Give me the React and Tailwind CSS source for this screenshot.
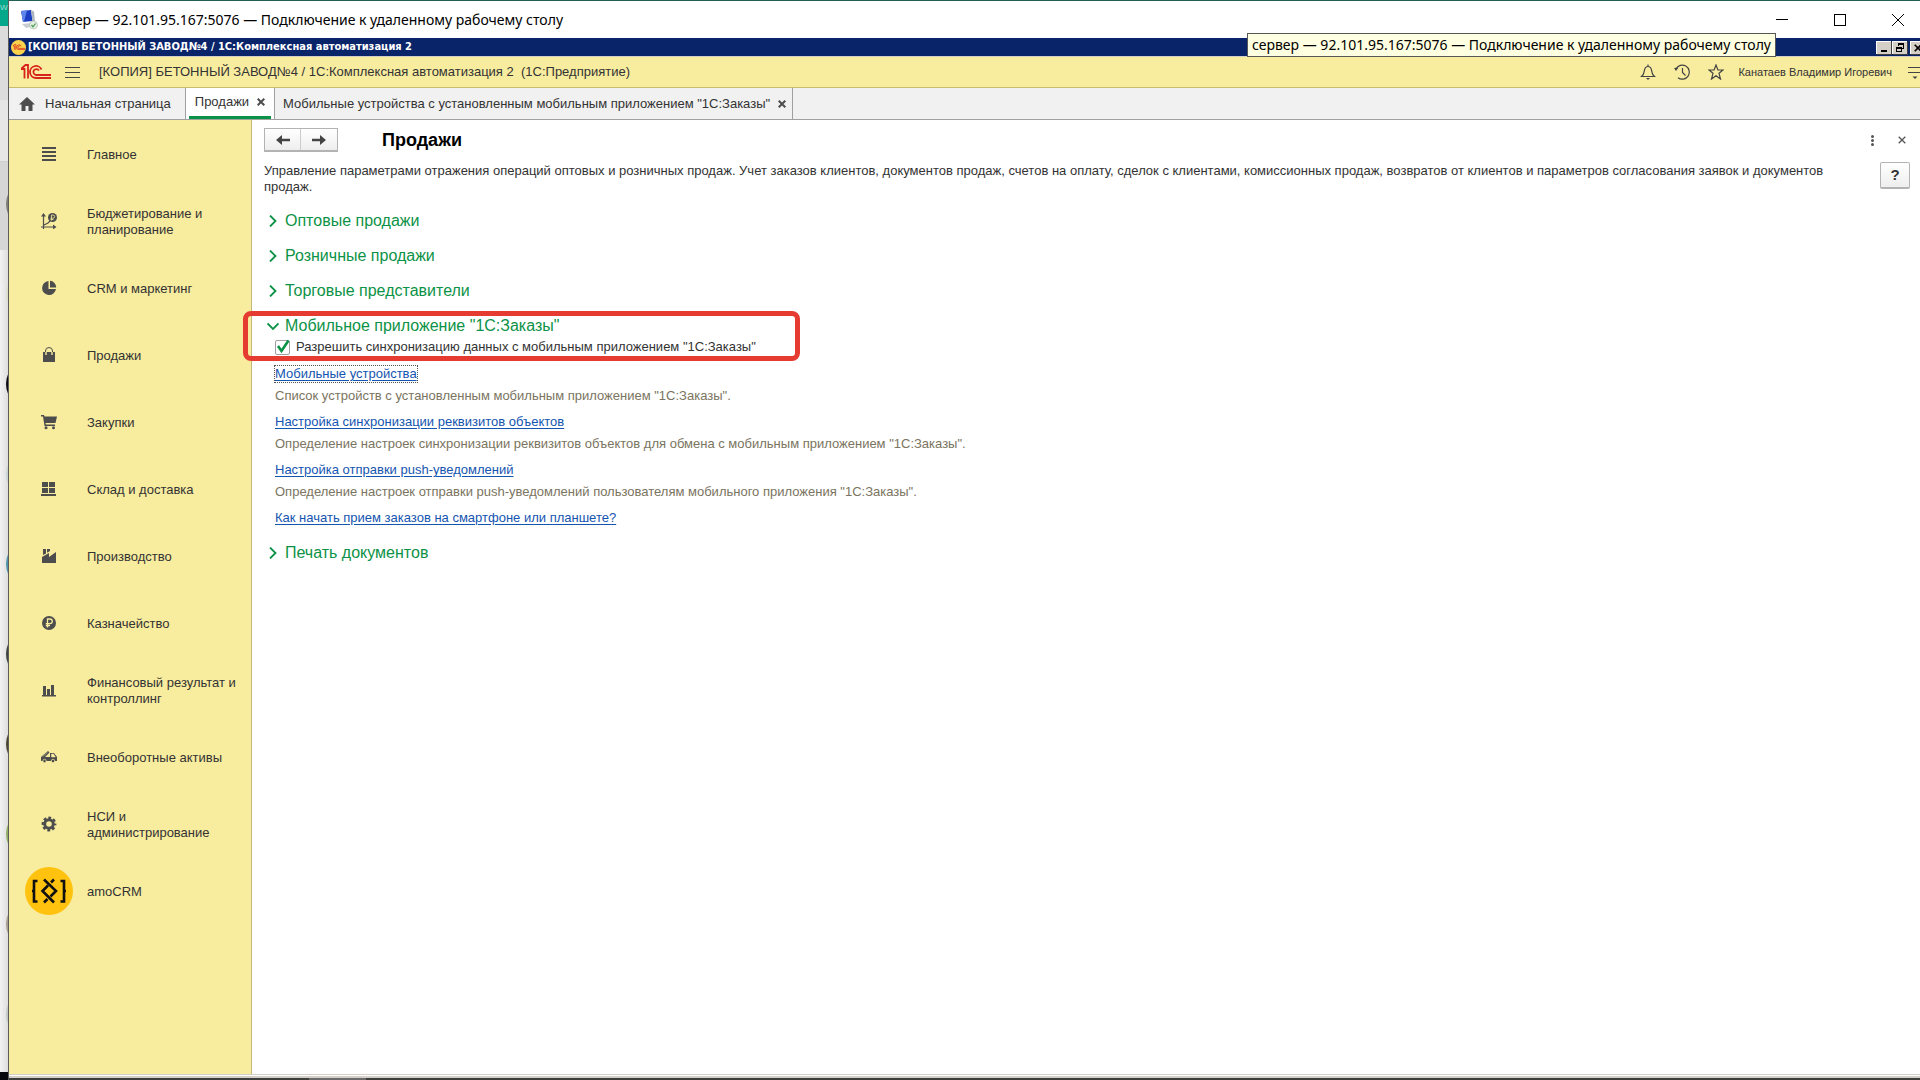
import clsx from 'clsx';

const SECTIONS = [
  { label: 'Главное', icon: 'main' },
  { label: 'Бюджетирование и планирование', icon: 'budget' },
  { label: 'CRM и маркетинг', icon: 'crm' },
  { label: 'Продажи', icon: 'sales' },
  { label: 'Закупки', icon: 'cart' },
  { label: 'Склад и доставка', icon: 'stock' },
  { label: 'Производство', icon: 'factory' },
  { label: 'Казначейство', icon: 'ruble' },
  { label: 'Финансовый результат и контроллинг', icon: 'finance' },
  { label: 'Внеоборотные активы', icon: 'truck' },
  { label: 'НСИ и администрирование', icon: 'gear' },
  { label: 'amoCRM', icon: 'amo' },
];

const AVATARS = [
  'bg-[#7b7d76]',
  'bg-[#dcdccb]',
  'bg-[#0b0d12]',
  'bg-[#c9d3d3]',
  'bg-[#4f93ac]',
  'bg-[#3c4340]',
  'bg-[#4a4636]',
  'bg-[#8fae62]',
  'bg-[#a59d92]',
  'bg-[#c3c9c8]',
];

const LINKS = [
  {
    title: 'Мобильные устройства',
    text: 'Список устройств с установленным мобильным приложением "1С:Заказы".',
    focused: true,
  },
  {
    title: 'Настройка синхронизации реквизитов объектов',
    text: 'Определение настроек синхронизации реквизитов объектов для обмена с мобильным приложением "1С:Заказы".',
  },
  {
    title: 'Настройка отправки push-уведомлений',
    text: 'Определение настроек отправки push-уведомлений пользователям мобильного приложения "1С:Заказы".',
  },
  { title: 'Как начать прием заказов на смартфоне или планшете?' },
];

function SectionIcon({ name }) {
  if (name === 'amo') {
    return (
      <svg viewBox="0 0 48 48" className="size-12" fill="none" stroke="#111" strokeWidth="2.6">
        <circle cx="24" cy="24" r="24" fill="#ffc20e" stroke="none" />
        <path d="M12.500 14H9v20.500h3.500M35.500 14H39v20.500h-3.500M7 24h2M39 24h2" />
        <path d="M19 12.500L31 24l-5.500 5.500M29 12.500l-3 3M23 18.500L17.500 24 29 35.500M22.500 32L19 35.500" />
      </svg>
    );
  }
  return (
    <svg viewBox="0 0 16 16" className="size-4" fill="#4d4d4d">
      {name === 'main' && <path d="M1 1h14v2H1zM1 5h14v2H1zM1 9h14v2H1zM1 13h14v2H1z" />}
      {name === 'budget' && (
        <>
          <path d="M2.500 2v14M0 14h14M3 12l4-2 2-2" fill="none" stroke="#4d4d4d" strokeWidth="1.200" />
          <path d="M2.500 0L5 3.500H0zM15.500 14L12 11.500v5z" />
          <circle cx="11.500" cy="4.500" r="4.500" />
          <path d="M10.500 7.500v-5.500h1.500a1.500 1.500 0 010 3.200h-2.500M9.500 6.500h3" fill="none" stroke="#f8ec9f" strokeWidth=".8" />
        </>
      )}
      {name === 'crm' && (
        <path d="M7.500 1A7 7 0 1015 9H7.500zM9 .8V7.500h6.200A6.500 6.500 0 009 .8z" />
      )}
      {name === 'sales' && (
        <>
          <path d="M2 5h12v10H2z" />
          <path d="M5 8V4a3 3 0 016 0v4" fill="none" stroke="#f8ec9f" strokeWidth="1.400" />
          <path d="M4.500 5V4a3.500 3.500 0 017 0v1" fill="none" stroke="#4d4d4d" />
        </>
      )}
      {name === 'cart' && (
        <>
          <path d="M0 1h3l.5 1.500H16L14.500 9H4.500l.3 1.500H14V12H3.500L2 2.500H0z" />
          <circle cx="5" cy="13.700" r="1.500" />
          <circle cx="12.500" cy="13.700" r="1.500" />
        </>
      )}
      {name === 'stock' && <path d="M1 1h6v5H1zM8 1h6v5H8zM1 7h6v5H1zM8 7h6v5H8zM0 13h15v2H0z" />}
      {name === 'factory' && (
        <path d="M1 15V9l7-4v4l7-5v11zM2 1h3v4.500L2 7zM6 1h3v2L6 4.800z" />
      )}
      {name === 'ruble' && (
        <>
          <circle cx="8" cy="8" r="7" />
          <path d="M6.500 12.500V4H9a2.300 2.300 0 010 4.600H4.800M4.800 10.500H9" fill="none" stroke="#f8ec9f" strokeWidth="1.300" />
        </>
      )}
      {name === 'finance' && <path d="M1 13h14v1.500H1zM2 4h3v9H2zM6 7h3v6H6zM10 3h3V13h-3z" />}
      {name === 'truck' && (
        <>
          <path d="M0 8l7-6 1.500 1.500L4 8h5V4h4l3 4v4H0z" />
          <path d="M10.500 5h2l1.800 3h-3.800zM1.500 7.800l5-4.300" fill="#f8ec9f" stroke="#f8ec9f" strokeWidth=".5" />
          <circle cx="3.500" cy="12" r="1.700" stroke="#f8ec9f" strokeWidth=".7" />
          <circle cx="12" cy="12" r="1.700" stroke="#f8ec9f" strokeWidth=".7" />
        </>
      )}
      {name === 'gear' && (
        <>
          <circle cx="8" cy="8" r="4.300" fill="none" stroke="#4d4d4d" strokeWidth="3" />
          <circle cx="8" cy="8" r="6.200" fill="none" stroke="#4d4d4d" strokeWidth="2.400" strokeDasharray="2.800 2.070" strokeDashoffset="1.400" />
        </>
      )}
    </svg>
  );
}

function Logo1C({ className, color }) {
  return (
    <svg viewBox="0 0 30 16" className={className} fill="none" stroke={color} strokeWidth="1.800">
      <path d="M0 5h3.500v9.500M0 5L4.500 1H7v13.500" />
      <path d="M20.500 5.500A6 6 0 1015 14h15M18 6.500A3 3 0 1015 11h15" />
    </svg>
  );
}

function CloseMark({ className, width = 2 }) {
  return (
    <svg viewBox="0 0 8 8" className={className} stroke="currentColor" strokeWidth={width}>
      <path d="M.7.7l6.600 6.600M7.300.7L.7 7.300" />
    </svg>
  );
}

function Desktop() {
  return (
    <div className="relative flex w-2 shrink-0 flex-col overflow-hidden">
      <div className="h-[26px] bg-[#06a88c] text-[8px] leading-4 text-white/60">W</div>
      <div className="h-[74px] bg-[#dcdcdc]" />
      <div className="h-[62px] border-b border-[#cfcfcf] bg-[#e6e6e6]" />
      <div className="h-[88px] bg-[#d6d6d6]" />
      <div className="flex-1 bg-linear-to-r from-[#f3f3f3] to-[#dedede]" />
      <div className="h-2 bg-[#07090c]" />
      <div className="absolute top-[180px] left-1.5 flex flex-col gap-[42px]">
        {AVATARS.map((color) => (
          <div key={color} className={clsx('size-12 rounded-full', color)} />
        ))}
      </div>
    </div>
  );
}

function RemoteTitleBar() {
  return (
    <div className="flex h-[38px] items-center border-t border-[#1f5f55] bg-white pl-[11px] font-['Noto_Sans','Open_Sans',sans-serif] text-sm text-black">
      <svg viewBox="0 0 18 20" className="mr-1.5 h-5 w-[18px]">
        <path d="M1 1l10-1 1.500 11L3 12z" fill="#1d3fc4" />
        <path d="M1 1l6-.6L4 11.800 3 12z" fill="#5c86ea" />
        <path d="M11 0l3 1.500L15 12l-2.500-1z" fill="#aeb4bd" />
        <path d="M2 14l9-1 3 3-8 2z" fill="#c8ccd3" />
        <circle cx="13.500" cy="15" r="4" fill="#e5eee5" stroke="#9fb59f" strokeWidth=".6" />
        <path d="M11.500 15l1.500 1.800 2.500-3.300" fill="none" stroke="#3c9a45" strokeWidth="1.200" />
      </svg>
      <span className="flex-1">сервер — 92.101.95.167:5076 — Подключение к удаленному рабочему столу</span>
      <div className="flex items-center gap-[46px] pr-4">
        <button aria-label="Свернуть">
          <svg viewBox="0 0 12 12" className="size-3" stroke="#000" shapeRendering="crispEdges">
            <path d="M0 5.500h12" />
          </svg>
        </button>
        <button aria-label="Развернуть">
          <svg viewBox="0 0 12 12" className="size-3" fill="none" stroke="#000" shapeRendering="crispEdges">
            <path d="M.5.5h11v11H.5z" />
          </svg>
        </button>
        <button aria-label="Закрыть">
          <svg viewBox="0 0 12 12" className="size-3" stroke="#000">
            <path d="M0 0l12 12M12 0L0 12" />
          </svg>
        </button>
      </div>
    </div>
  );
}

function AppTitleBar() {
  const control =
    'flex h-[13px] w-[15px] items-center justify-center border-t border-l border-white bg-[#d4d0c8] shadow-[1px_1px_0_#404040]';
  return (
    <div className="relative flex h-[18px] items-center overflow-visible bg-[#0a246a] pl-0.5 text-white">
      <span className="mr-0.5 flex size-[15px] items-center justify-center rounded-full bg-[#fbd24c]">
        <Logo1C className="w-3" color="#d8231c" />
      </span>
      <span className="flex-1 font-['DejaVu_Sans_Condensed','DejaVu_Sans',sans-serif] text-[11px] font-bold">
        [КОПИЯ] БЕТОННЫЙ ЗАВОД№4 / 1С:Комплексная автоматизация 2
      </span>
      <div className="-mr-[5px] flex items-center text-black">
        <button className={control} aria-label="Свернуть окно">
          <svg viewBox="0 0 10 10" className="size-2.5"><path d="M2 7h6v2H2z" /></svg>
        </button>
        <button className={clsx(control, 'ml-px')} aria-label="Восстановить окно">
          <svg viewBox="0 0 10 10" className="size-2.5" fill="none" stroke="#000" shapeRendering="crispEdges">
            <path d="M3.500 3V.5h5v5H7M3 1.500h6M1.500 4.500h5v4h-5zM1 5.500h6" />
          </svg>
        </button>
        <button className={clsx(control, 'ml-[3px]')} aria-label="Закрыть окно">
          <CloseMark className="size-2" width={1.6} />
        </button>
      </div>
      <div className="absolute -top-[5px] right-36 z-10 flex h-6 items-center border border-[#575757] bg-[#ffffe1] px-1 font-['Noto_Sans','Open_Sans',sans-serif] text-sm whitespace-nowrap text-black">
        сервер — 92.101.95.167:5076 — Подключение к удаленному рабочему столу
      </div>
    </div>
  );
}

function MainHeader() {
  return (
    <header className="flex h-8 items-center overflow-hidden border-t border-b border-t-[#d4d0c8] border-b-[#c8bb70] bg-[#f8ec9f] pl-3 text-[#333]">
      <Logo1C className="w-[30px]" color="#d8231c" />
      <button className="ml-3.5 flex w-[15px] flex-col gap-1" aria-label="Меню">
        <span className="h-px w-full bg-[#444]" />
        <span className="h-px w-full bg-[#444]" />
        <span className="h-px w-full bg-[#444]" />
      </button>
      <span className="ml-[19px] flex-1 text-[13px] whitespace-pre">
        [КОПИЯ] БЕТОННЫЙ ЗАВОД№4 / 1С:Комплексная автоматизация 2  (1С:Предприятие)
      </span>
      <div className="-mr-[6px] flex items-center">
        <button aria-label="Уведомления">
          <svg viewBox="0 0 16 16" className="size-4" fill="none" stroke="#444" strokeWidth="1.200">
            <path d="M1.500 12.500c2.500-2 2.500-4 3-6.500C5 3.500 6 2.500 8 2.500S11 3.500 11.500 6c.5 2.500.5 4.500 3 6.500zM8 .5v2" />
            <path d="M6 14h4l-2 2z" fill="#444" stroke="none" />
          </svg>
        </button>
        <button className="ml-[18px]" aria-label="История">
          <svg viewBox="0 0 16 16" className="size-4" fill="none" stroke="#444" strokeWidth="1.200">
            <path d="M2 5A7 7 0 114 13.700M8.500 4v4.500l3 3" />
            <path d="M0 4l4.500-.5L2 7z" fill="#444" stroke="none" />
          </svg>
        </button>
        <button className="ml-[18px]" aria-label="Избранное">
          <svg viewBox="0 0 16 16" className="size-4" fill="none" stroke="#444" strokeWidth="1.200">
            <path d="M8 1l1.900 5h5.100l-4 3.300L12.500 15 8 11.700 3.500 15 5 9.300 1 6h5.100z" />
          </svg>
        </button>
        <span className="ml-3.5 text-[11px]">Канатаев Владимир Игоревич</span>
        <button className="ml-4" aria-label="Сервис и настройки">
          <svg viewBox="0 0 18 16" className="h-4 w-[18px]" stroke="#444" fill="#444">
            <path d="M0 3.500h18M0 8.500h18" />
            <path d="M4.500 12.500h5L7 15z" stroke="none" />
          </svg>
        </button>
      </div>
    </header>
  );
}

function Tabs() {
  return (
    <nav className="flex h-8 border-b border-[#a0a0a0] bg-[#f1f1f1] text-[13px] text-[#333]">
      <button className="flex items-center border-r border-[#a0a0a0] pr-3.5 pl-2.5">
        <svg viewBox="0 0 16 14" className="mr-2.5 h-3.5 w-4" fill="#4d4d4d">
          <path d="M8 0l8 7.500h-2.500V14H9.500V9h-3v5h-4V7.500H0z" />
        </svg>
        Начальная страница
      </button>
      <div className="flex border-r border-[#a0a0a0] bg-white px-[3px]">
        <div className="flex items-center gap-2 border-b-3 border-[#0c9246] px-1.5">
          <button>Продажи</button>
          <button className="text-[#4d4d4d]" aria-label="Закрыть вкладку">
            <CloseMark className="size-2" />
          </button>
        </div>
      </div>
      <div className="flex items-center gap-2 border-r border-[#a0a0a0] pr-1.5 pl-2">
        <button>Мобильные устройства с установленным мобильным приложением "1С:Заказы"</button>
        <button className="text-[#4d4d4d]" aria-label="Закрыть вкладку">
          <CloseMark className="size-2" />
        </button>
      </div>
    </nav>
  );
}

function Sidebar() {
  return (
    <aside className="w-[243px] shrink-0 border-r border-[#c3b87c] bg-[#f8ec9f] pt-px">
      {SECTIONS.map(({ label, icon }) => (
        <button key={label} className="flex h-[67px] w-full items-center pr-1.5 pl-4 text-left text-[13px] leading-4 text-[#333]">
          <span className="mr-3.5 flex w-12 shrink-0 justify-center pb-px">
            <SectionIcon name={icon} />
          </span>
          <span>{label}</span>
        </button>
      ))}
    </aside>
  );
}

function Group({ title, open, children }) {
  return (
    <section>
      <button className="flex h-[35px] items-center text-base text-[#0c9246]" aria-expanded={!!open}>
        <svg viewBox="0 0 12 12" className="mr-1.5 ml-[3px] size-3" fill="none" stroke="currentColor" strokeWidth="1.800">
          {open ? <path d="M.5 3.500L6 9l5.500-5.500" /> : <path d="M3 .5L8.500 6 3 11.500" />}
        </svg>
        {title}
      </button>
      {children}
    </section>
  );
}

function NavArrow({ back }) {
  return (
    <svg viewBox="0 0 14 10" className="h-2.5 w-3.5" fill="#444">
      {back ? <path d="M0 5l6-5v3.800h8v2.400H6V10z" /> : <path d="M14 5L8 0v3.800H0v2.400h8V10z" />}
    </svg>
  );
}

function SalesSettings() {
  return (
    <main className="min-w-0 flex-1 bg-white pt-2 pr-2.5 pl-3 text-[13px] leading-4 text-[#333]">
      <div className="flex h-6 items-center">
        <div className="flex h-6 border border-b-2 border-[#b3b3b3] bg-linear-to-b from-white to-[#eee]">
          <button className="flex w-9 items-center justify-center border-r border-[#ccc]" aria-label="Назад">
            <NavArrow back />
          </button>
          <button className="flex w-9 items-center justify-center" aria-label="Вперед">
            <NavArrow />
          </button>
        </div>
        <h1 className="ml-11 flex-1 text-lg font-bold text-black">Продажи</h1>
        <button className="mr-6 flex flex-col gap-px" aria-label="Еще">
          <span className="size-[3px] rounded-full bg-[#555]" />
          <span className="size-[3px] rounded-full bg-[#555]" />
          <span className="size-[3px] rounded-full bg-[#555]" />
        </button>
        <button className="mr-1 text-[#555]" aria-label="Закрыть">
          <CloseMark className="size-2" width={1.3} />
        </button>
      </div>

      <div className="flex justify-between">
        <p className="mt-[11px] pr-4">
          Управление параметрами отражения операций оптовых и розничных продаж. Учет заказов клиентов, документов продаж,
          счетов на оплату, сделок с клиентами, комиссионных продаж, возвратов от клиентов и параметров согласования заявок
          и документов продаж.
        </p>
        <button className="mt-2.5 h-[27px] w-[30px] shrink-0 rounded-xs border border-b-2 border-[#b3b3b3] bg-linear-to-b from-white to-[#eee] text-[15px] font-bold">
          ?
        </button>
      </div>

      <div className="mt-2">
        <Group title="Оптовые продажи" />
        <Group title="Розничные продажи" />
        <Group title="Торговые представители" />
        <div className="relative">
          <Group title={'Мобильное приложение "1С:Заказы"'} open>
            <label className="-mt-1 flex h-4 items-center gap-1.5 pl-[11px]">
              <span className="relative size-[15px]">
                <input
                  type="checkbox"
                  defaultChecked
                  className="peer block size-[15px] appearance-none rounded-xs border border-[#a0a0a0] bg-white"
                />
                <svg viewBox="0 0 15 15" className="pointer-events-none absolute inset-0 hidden size-[15px] overflow-visible peer-checked:block" fill="none" stroke="#0c9246" strokeWidth="2.600">
                  <path d="M3 6l3.500 5L13.500.5" />
                </svg>
              </span>
              Разрешить синхронизацию данных с мобильным приложением "1С:Заказы"
            </label>
            <ul className="mt-[11px] pb-px pl-[11px]">
              {LINKS.map(({ title, text, focused }) => (
                <li key={title} className="mb-2">
                  <a
                    href="#"
                    className={clsx(
                      'inline-block text-[#1455b0] underline underline-offset-2 outline-[#555]',
                      focused && 'outline-1 outline-dotted',
                    )}
                  >
                    {title}
                  </a>
                  {text && <p className="mt-1.5 pb-0.5 text-[#7a7460]">{text}</p>}
                </li>
              ))}
            </ul>
          </Group>
          <div className="pointer-events-none absolute top-[3px] -left-[21px] h-[50px] w-[557px] rounded-lg border-5 border-[#e63b30]" />
        </div>
        <Group title="Печать документов" />
      </div>
    </main>
  );
}

export default function App() {
  return (
    <div className="flex min-h-screen overflow-hidden bg-white font-['Liberation_Sans',Arial,sans-serif]">
      <Desktop />
      <div className="flex min-w-0 flex-1 flex-col border-l border-[#5c5c5c]">
        <RemoteTitleBar />
        <AppTitleBar />
        <MainHeader />
        <Tabs />
        <div className="flex flex-1">
          <Sidebar />
          <SalesSettings />
        </div>
        <div className="h-px bg-[#d4d0c8]" />
        <div className="h-px bg-white" />
        <div className="h-0.5 bg-[#d4d0c8]" />
        <div className="flex h-0.5 bg-[#3d3f3c] pl-[300px]">
          <div className="w-[57px] bg-[#6b6b6b]" />
        </div>
      </div>
    </div>
  );
}
